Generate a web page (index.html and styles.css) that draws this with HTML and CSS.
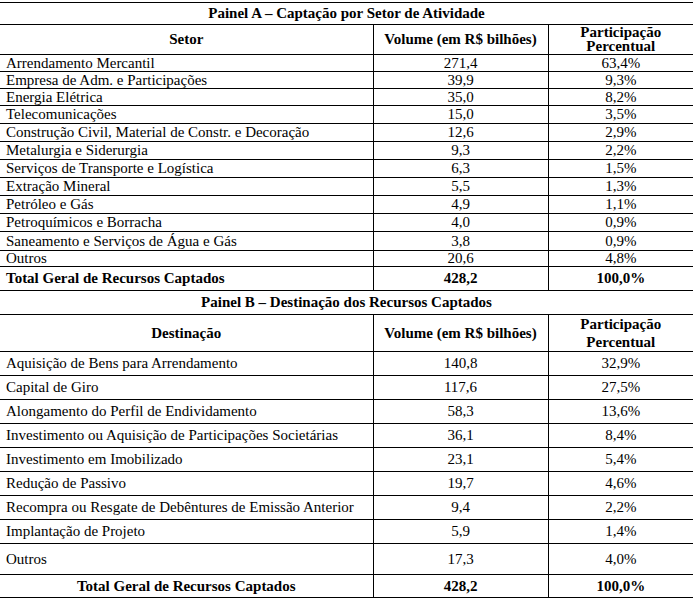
FILE: index.html
```html
<!DOCTYPE html>
<html lang="pt">
<head>
<meta charset="utf-8">
<title>Painel A e B</title>
<link rel="stylesheet" href="styles.css">
</head>
<body>
<table class="grid">
  <colgroup>
    <col class="col1">
    <col class="col2">
    <col class="col3">
  </colgroup>
  <tbody>
    <tr class="title first"><td colspan="3">Painel A – Captação por Setor de Atividade</td></tr>
    <tr class="head head-a">
      <td class="c1">Setor</td>
      <td class="c2">Volume (em R$ bilhões)</td>
      <td class="c3"><span class="pp">Participação<br>Percentual</span></td>
    </tr>
    <tr class="h17"><td class="c1">Arrendamento Mercantil</td><td class="c2">271,4</td><td class="c3">63,4%</td></tr>
    <tr class="h17"><td class="c1">Empresa de Adm. e Participações</td><td class="c2">39,9</td><td class="c3">9,3%</td></tr>
    <tr class="h17"><td class="c1">Energia Elétrica</td><td class="c2">35,0</td><td class="c3">8,2%</td></tr>
    <tr class="h18"><td class="c1">Telecomunicações</td><td class="c2">15,0</td><td class="c3">3,5%</td></tr>
    <tr class="h18"><td class="c1">Construção Civil, Material de Constr. e Decoração</td><td class="c2">12,6</td><td class="c3">2,9%</td></tr>
    <tr class="h18"><td class="c1">Metalurgia e Siderurgia</td><td class="c2">9,3</td><td class="c3">2,2%</td></tr>
    <tr class="h18"><td class="c1">Serviços de Transporte e Logística</td><td class="c2">6,3</td><td class="c3">1,5%</td></tr>
    <tr class="h18"><td class="c1">Extração Mineral</td><td class="c2">5,5</td><td class="c3">1,3%</td></tr>
    <tr class="h18"><td class="c1">Petróleo e Gás</td><td class="c2">4,9</td><td class="c3">1,1%</td></tr>
    <tr class="h18"><td class="c1">Petroquímicos e Borracha</td><td class="c2">4,0</td><td class="c3">0,9%</td></tr>
    <tr class="h19"><td class="c1">Saneamento e Serviços de Água e Gás</td><td class="c2">3,8</td><td class="c3">0,9%</td></tr>
    <tr class="h16"><td class="c1">Outros</td><td class="c2">20,6</td><td class="c3">4,8%</td></tr>
    <tr class="total total-a"><td class="c1">Total Geral de Recursos Captados</td><td class="c2">428,2</td><td class="c3">100,0%</td></tr>

    <tr class="title title-b"><td colspan="3">Painel B – Destinação dos Recursos Captados</td></tr>
    <tr class="head head-b">
      <td class="c1">Destinação</td>
      <td class="c2">Volume (em R$ bilhões)</td>
      <td class="c3"><span class="pp pp-b">Participação<br>Percentual</span></td>
    </tr>
    <tr class="rb"><td class="c1">Aquisição de Bens para Arrendamento</td><td class="c2">140,8</td><td class="c3">32,9%</td></tr>
    <tr class="rb"><td class="c1">Capital de Giro</td><td class="c2">117,6</td><td class="c3">27,5%</td></tr>
    <tr class="rb"><td class="c1">Alongamento do Perfil de Endividamento</td><td class="c2">58,3</td><td class="c3">13,6%</td></tr>
    <tr class="rb"><td class="c1">Investimento ou Aquisição de Participações Societárias</td><td class="c2">36,1</td><td class="c3">8,4%</td></tr>
    <tr class="rb"><td class="c1">Investimento em Imobilizado</td><td class="c2">23,1</td><td class="c3">5,4%</td></tr>
    <tr class="rb"><td class="c1">Redução de Passivo</td><td class="c2">19,7</td><td class="c3">4,6%</td></tr>
    <tr class="rb"><td class="c1">Recompra ou Resgate de Debêntures de Emissão Anterior</td><td class="c2">9,4</td><td class="c3">2,2%</td></tr>
    <tr class="rb"><td class="c1">Implantação de Projeto</td><td class="c2">5,9</td><td class="c3">1,4%</td></tr>
    <tr class="rb rb-tall"><td class="c1">Outros</td><td class="c2">17,3</td><td class="c3">4,0%</td></tr>
    <tr class="total total-b"><td class="c1">Total Geral de Recursos Captados</td><td class="c2">428,2</td><td class="c3">100,0%</td></tr>
  </tbody>
</table>
</body>
</html>
```
FILE: styles.css
```css
html, body {
  margin: 0;
  padding: 0;
  background: #ffffff;
}

body {
  padding-top: 2px;
  font-family: "Liberation Serif", "DejaVu Serif", serif;
  font-size: 15px;
  color: #000000;
}

.grid {
  border-collapse: collapse;
  width: 693px;
  table-layout: fixed;
  font-family: "Liberation Serif", "DejaVu Serif", serif;
  font-size: 15px;
}

.col1 { width: 373px; }
.col2 { width: 175px; }
.col3 { width: 145px; }

.grid td {
  padding: 0;
  border-bottom: 1px solid #000;
  line-height: 15px;
  vertical-align: middle;
  white-space: nowrap;
  overflow: hidden;
}

.grid .first td {
  border-top: 1px solid #000;
}

.grid td.c1 {
  padding-left: 6px;
}

.grid td.c2 {
  text-align: center;
  border-left: 1px solid #000;
}

.grid td.c3 {
  text-align: center;
  border-left: 1px solid #000;
}

.title td {
  text-align: center;
  font-weight: bold;
  height: 21px;
}

.title-b td {
  height: 23px;
}

.head td {
  font-weight: bold;
  text-align: center;
}

.grid .head td.c1 {
  text-align: center;
  padding-left: 0;
}

.head-a td {
  height: 29px;
}

.head-b td {
  height: 36px;
}

.pp {
  display: inline-block;
  line-height: 14px;
}

.pp-b {
  line-height: 18px;
}

.h16 td { height: 15px; }
.h17 td { height: 16px; }
.h18 td { height: 17px; }
.h19 td { height: 18px; }

.total td {
  font-weight: bold;
}

.total-a td {
  height: 23px;
}

.rb td {
  height: 23px;
}

.rb-tall td {
  height: 30px;
}

.total-b td {
  height: 22px;
}

.grid .total-b td.c1 {
  text-align: center;
  padding-left: 0;
}
```
